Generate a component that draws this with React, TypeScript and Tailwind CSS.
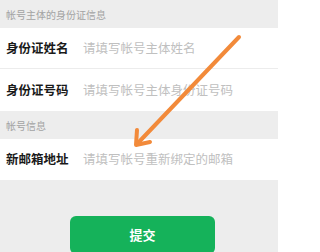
export default function App() {
  const font = { fontFamily: '"Noto Sans CJK SC", "Noto Sans", sans-serif' };
  return (
    <div className="relative w-[278px] h-[252px] overflow-hidden bg-[#ededed]" style={font}>
      {/* section header */}
      <div className="h-[28px] flex items-center pl-[6px] text-[10px] text-[#a3a3a3]">帐号主体的身份证信息</div>
      <div className="bg-white">
        <div className="h-[41px] flex items-center pl-[6px] border-b border-[#ececec]">
          <span className="w-[77px] text-[12.5px] font-bold text-[#1a1a1a]">身份证姓名</span>
          <span className="text-[12.5px] text-[#c0c0c0]">请填写帐号主体姓名</span>
        </div>
        <div className="h-[42px] flex items-center pl-[6px]">
          <span className="w-[77px] text-[12.5px] font-bold text-[#1a1a1a]">身份证号码</span>
          <span className="text-[12.5px] text-[#c0c0c0]">请填写帐号主体身份证号码</span>
        </div>
      </div>
      <div className="h-[28px] flex items-center pl-[6px] text-[10px] text-[#a3a3a3]">帐号信息</div>
      <div className="bg-white h-[41px] flex items-center pl-[6px]">
        <span className="w-[77px] text-[12.5px] font-bold text-[#1a1a1a]">新邮箱地址</span>
        <span className="text-[12.5px] text-[#c0c0c0]">请填写帐号重新绑定的邮箱</span>
      </div>
      <div className="pt-[36px] pl-[70px]">
        <div className="w-[145px] h-[38px] rounded-[6px] bg-[#15b25a] flex items-center justify-center text-[13px] font-bold text-white">
          提交
        </div>
      </div>
      {/* annotation arrow */}
      <svg className="absolute left-0 top-0" width="278" height="252" viewBox="0 0 278 252">
        <g stroke="#f28a3a" strokeWidth="4" strokeLinecap="round" strokeLinejoin="round" fill="none">
          <line x1="239" y1="37" x2="137" y2="144" />
          <polyline points="137,130 136,145 150,142" />
        </g>
      </svg>
    </div>
  );
}
